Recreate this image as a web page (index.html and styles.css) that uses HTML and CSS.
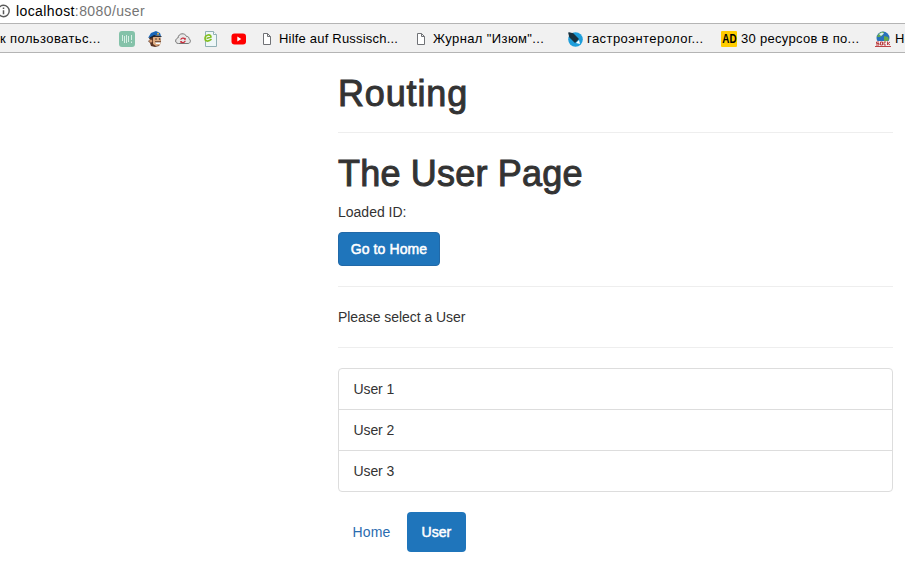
FILE: index.html
```html
<!DOCTYPE html>
<html lang="en">
<head>
<meta charset="utf-8">
<title>Routing</title>
<link rel="stylesheet" href="styles.css">
</head>
<body>
<header>
  <div class="address">
    <svg class="info" width="10" height="16" viewBox="0 0 10 16"><circle cx="3.5" cy="8" r="5.7" fill="none" stroke="#5a5a5a" stroke-width="1.4"/><path d="M3.5 7.2v4M3.5 4.6v1.5" stroke="#5a5a5a" stroke-width="1.5"/></svg>
    <span class="url"><b>localhost</b>:8080/user</span>
  </div>
  <nav class="bookmarks">
    <span class="bm bm-first">к пользоватьс...</span>
    <span class="bm"><svg width="16" height="16" viewBox="0 0 16 16"><rect width="16" height="16" rx="3" fill="#84c2a9"/><path d="M3.500 4v6M5.500 5v7M7.500 4v8M9.500 5v6M12.500 4v5M12.500 10.500v1.500" stroke="#d7eee4" stroke-width="1"/></svg></span>
    <span class="bm"><svg width="16" height="16" viewBox="0 0 16 16"><path d="M4 5 2 7 3 9 1 10l2 2 1 3 4 1 4-1 2-4-1-6z" fill="#5b3524"/><path d="M6 6l7 0 1 5-1 3-4 1-3-2z" fill="#dfad82"/><path d="M8 11l6 0-1 2-4 0z" fill="#fff"/><path d="M8 10.8h6" stroke="#573321"/><circle cx="9" cy="8" r=".7" fill="#222"/><circle cx="12.500" cy="8" r=".7" fill="#222"/><circle cx="3.800" cy="10" r="1.600" fill="#d59b71"/><path d="M1 7 4 2 9 0l4 2 1 3-5-1-5 2z" fill="#1765b8"/><path d="M2 7l5-3 7 1 1 1-7-.5-5 2z" fill="#172333"/><circle cx="11" cy="2.800" r="1" fill="#e5b543"/></svg></span>
    <span class="bm"><svg width="16" height="16" viewBox="0 0 16 16"><path d="M3.500 12.500C1 12.500 0 10.500 1 8.500 1.500 7.500 2.500 7 3 7 3.500 1.800 10 1.500 11.500 5.500c2-.2 2.500 1 2.500 2.200 2.300 1.300 1.500 4.800-1 4.800z" fill="#e7e7e7" stroke="#777"/><path d="M5.800 8.800C6 6.800 9 6.500 10.200 8.200M10.300 9.800C9.500 12 6.800 12 5.900 10.600" fill="none" stroke="#c72d3c" stroke-width="1.200"/><path d="M10.800 6.700v2H8.800zM5.300 12v-2h2z" fill="#c72d3c"/></svg></span>
    <span class="bm"><svg width="16" height="16" viewBox="0 0 16 16"><path d="M2.500.5h8l3 3v12h-11z" fill="#eef7f8" stroke="#91b0b5"/><path d="M10.500.5v3h3" fill="#fff" stroke="#91b0b5"/><path d="M3.500 7.500 8 6C7.500 2.800 2.500 3.500 2 7c-.2 3.800 3.500 4 6.500 1.200" fill="none" stroke="#83bf22" stroke-width="1.600"/></svg></span>
    <span class="bm"><svg width="16" height="16" viewBox="0 0 16 16"><rect x=".5" y="2.500" width="14.500" height="11" rx="3" fill="#f00"/><path d="M6.300 5.500v5l4-2.500z" fill="#fff"/></svg></span>
    <span class="bm"><svg class="page" width="10" height="14" viewBox="0 0 10 14"><path d="M1.500 1.500h4l3 3v8h-7zM5.500 1.500v3h3" fill="#fff" stroke="#707276"/></svg><span class="label t2">Hilfe auf Russisch...</span></span>
    <span class="bm"><svg class="page" width="10" height="14" viewBox="0 0 10 14"><path d="M1.500 1.500h4l3 3v8h-7zM5.500 1.500v3h3" fill="#fff" stroke="#707276"/></svg><span class="label">Журнал "Изюм"...</span></span>
    <span class="bm"><svg width="16" height="16" viewBox="0 0 16 16"><circle cx="8.500" cy="8.500" r="7.300" fill="#1e9edb"/><path d="M2 2 6 3l5 5-3 3-5-5z" fill="#18313e" stroke="#18313e" stroke-width="1.500" stroke-linejoin="round"/><path d="M9 12l3-3 1 4z" fill="#fff"/></svg><span class="label t4">гастроэнтеролог...</span></span>
    <span class="bm"><span class="ad"><span>AD</span></span><span class="label t5">30 ресурсов в по...</span></span>
    <span class="bm"><svg width="16" height="16" viewBox="0 0 16 16"><circle cx="8" cy="7" r="6.500" fill="#2771bd"/><path d="M2 6C3 2 7 0 9 1L8 4 5 6zM9 5l4 1 1 3-5 2z" fill="#65a94c"/><path d="M4 3 7 1.500l2 1L6 5z" fill="#d7edf8"/><path d="M1 10h14v5H1z" fill="#f4eaea"/><path d="M4 11H1.500v1.500H4V14H1M5.500 11h2v3h-2zM11 11H9v3h2M12.500 10.500V14M15 11l-2 1.500L15 14M0 15.500h16" fill="none" stroke="#b52f32" stroke-width=".9"/></svg><span class="label">Но</span></span>
  </nav>
</header>
<main class="column">
  <h1 class="title">Routing</h1>
  <hr>
  <h1 class="subtitle">The User Page</h1>
  <p>Loaded ID:</p>
  <button class="btn">Go to Home</button>
  <hr>
  <p class="prompt">Please select a User</p>
  <hr>
  <ul class="list">
    <li>User 1</li>
    <li>User 2</li>
    <li>User 3</li>
  </ul>
  <nav class="pills"><a>Home</a><a class="active">User</a></nav>
</main>
</body>
</html>
```
FILE: styles.css
```css
* { box-sizing: border-box; }
body { margin: 0; height: 565px; overflow: hidden; background: #fff; color: #333; font: 14px/20px "Liberation Sans", Arial, sans-serif; }
.address { height: 23px; padding-bottom: 1px; display: flex; align-items: center; }
.info { width: 10px; margin-right: 6px; }
.url { font-size: 14px; letter-spacing: .4px; color: #757575; white-space: nowrap; }
.url b { font-weight: 400; color: #000; }
.bookmarks { height: 30px; background: #f1f1f1; border-top: 1px solid #b4b4b4; border-bottom: 1px solid #b4b4b4; display: grid; grid-template-columns: 119px 28px 28px 28px 28px 31px 154px 151px 154px 154px 30px; font-size: 13px; color: #000; overflow: hidden; }
.bm { display: flex; align-items: center; white-space: nowrap; gap: 4px; padding-top: 1px; }
.bm svg { flex: none; }
.bm .page { margin-right: 3px; }
.bm-first { padding-top: 2px; letter-spacing: .4px; }
.label { letter-spacing: .4px; }
.label.t2 { letter-spacing: .2px; }
.label.t4 { letter-spacing: .45px; }
.label.t5 { letter-spacing: .3px; }
.ad { width: 16px; height: 16px; border-radius: 1px; background: #fc0; display: flex; align-items: center; justify-content: center; font: bold 13px/16px "Liberation Sans", Arial, sans-serif; }
.ad span { transform: scaleX(.76); }
.column { width: 555px; margin-left: 338px; padding-top: 20px; }
h1 { margin: 0; padding-top: 1px; height: 39px; font-size: 36px; line-height: 39px; font-weight: 400; -webkit-text-stroke: 1px #333; }
.title { letter-spacing: .85px; }
.subtitle { margin-bottom: 10px; letter-spacing: .2px; }
hr { height: 1px; margin: 20px 0; border: 0; background: #eee; }
p { margin: 0 0 10px; }
.prompt { letter-spacing: -.05px; }
.btn { display: block; width: 102px; height: 34px; padding: 0; border: 1px solid #2169a8; border-radius: 4px; background: #1f75bb; color: #fff; font: inherit; letter-spacing: .1px; -webkit-text-stroke: .5px #fff; }
.list { list-style: none; margin: 0 0 20px; padding: 0; border: 1px solid #ddd; border-radius: 4px; }
.list li { height: 41px; padding: 10px 14.5px; border-bottom: 1px solid #ddd; letter-spacing: -.1px; }
.list li:last-child { height: 40px; border-bottom: 0; }
.pills { display: flex; gap: 2px; }
.pills a { padding: 10px 14.6px; color: #2a6cb0; border-radius: 4px; letter-spacing: .1px; }
.pills .active { width: 59px; background: #1f75bb; color: #fff; letter-spacing: 0; -webkit-text-stroke: .5px #fff; }
```
